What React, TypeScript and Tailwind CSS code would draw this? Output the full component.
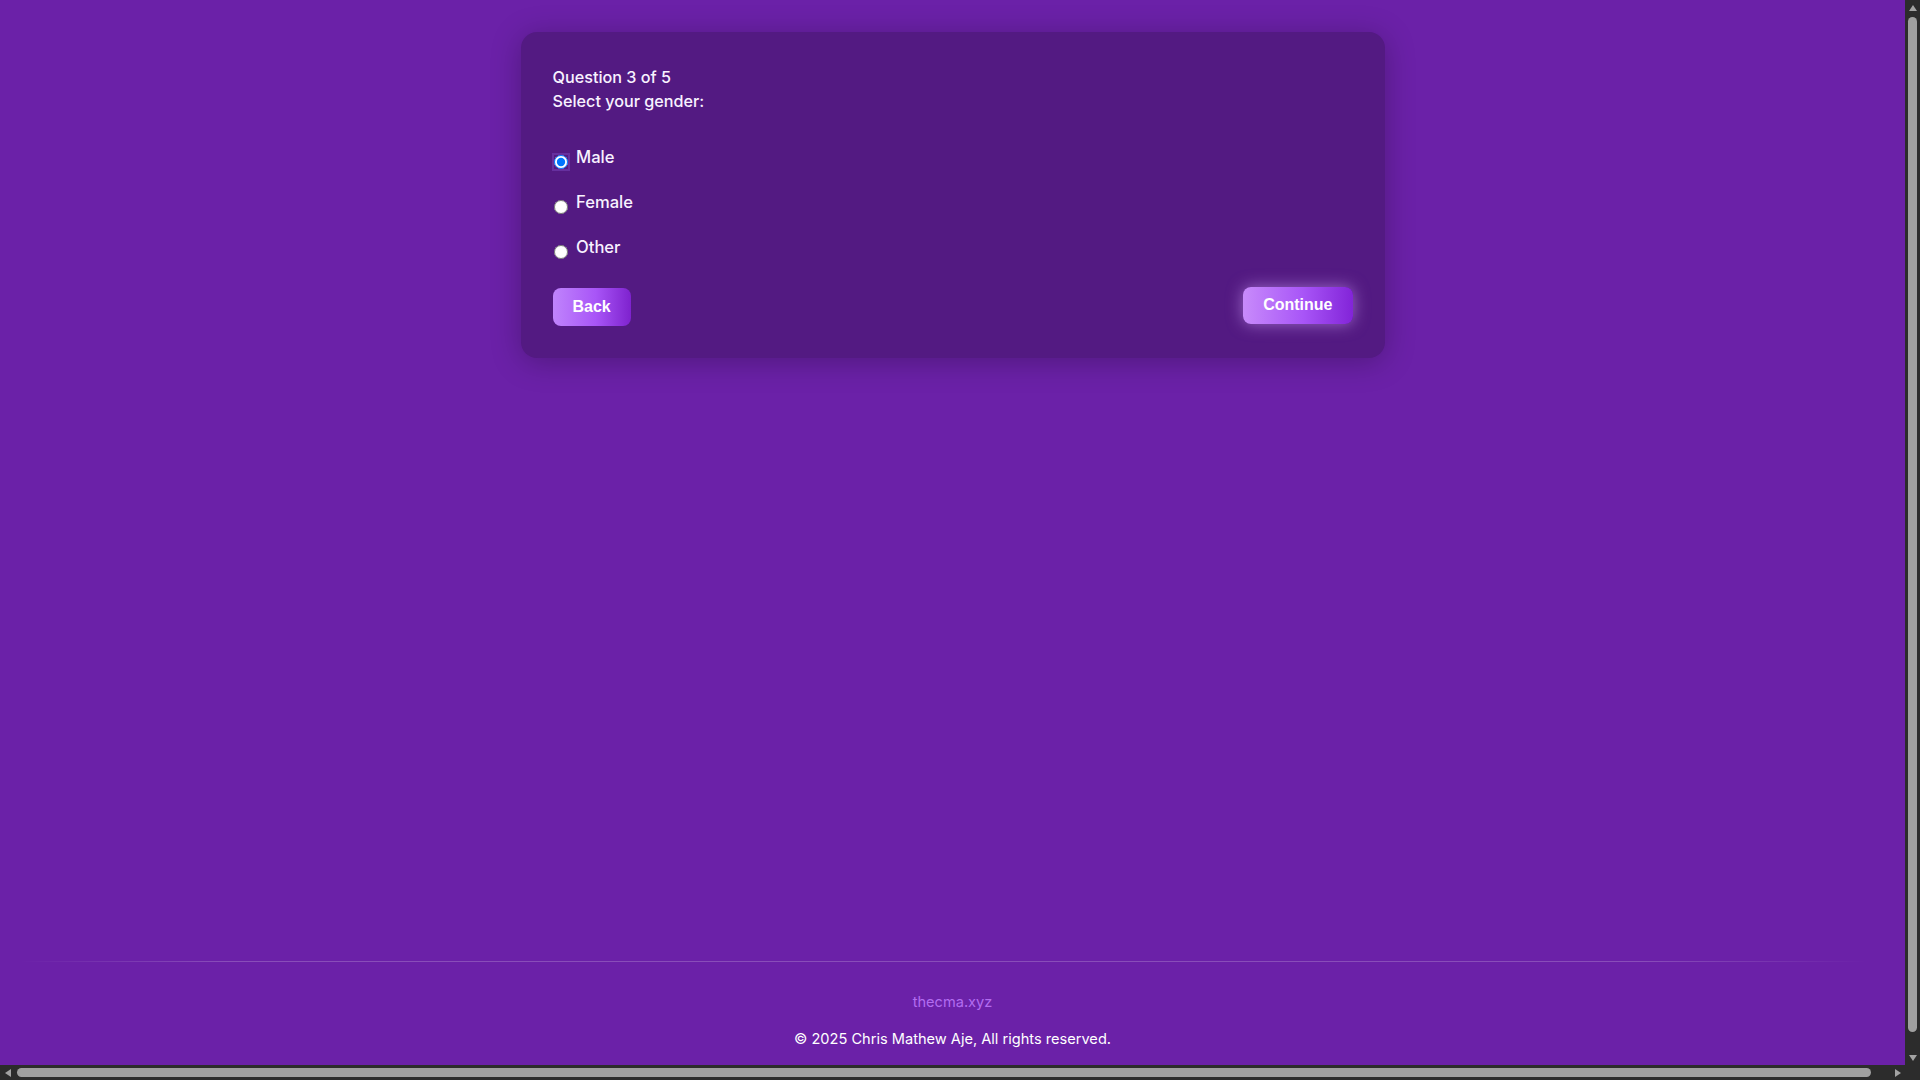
import React from "react";

function Tri({ dir }: { dir: "up" | "down" | "left" | "right" }) {
  const pts =
    dir === "up"
      ? "0,7 4,1 8,7"
      : dir === "down"
      ? "0,1 8,1 4,7"
      : dir === "left"
      ? "7,0 7,8 1,4"
      : "1,0 1,8 7,4";
  return (
    <svg width="8" height="8" viewBox="0 0 8 8">
      <polygon points={pts} fill="#a3a3a3" />
    </svg>
  );
}

function Option({ label, checked }: { label: string; checked?: boolean }) {
  return (
    <label className="flex h-6 items-start">
      <input
        type="radio"
        name="gender"
        defaultChecked={checked}
        className={
          "mt-[9.5px] ml-px mr-[8.5px] h-[14px] w-[14px] shrink-0 " +
          (checked ? "outline-[2.5px] outline-solid outline-[#66309f]" : "")
        }
      />
      <span className="leading-6">{label}</span>
    </label>
  );
}

export default function App() {
  return (
    <div className="flex h-screen w-screen flex-col overflow-hidden bg-[#2c2c2c] font-['Inter',sans-serif]">
      <div className="flex min-h-0 flex-1">
        <main className="flex min-w-0 flex-1 flex-col bg-[#6b21a8] text-[#f8f2ff]">
          <section className="mx-auto mt-8 w-[864px] rounded-2xl bg-[#531a82] px-8 pt-[33px] pb-8 shadow-[0_4px_30px_rgba(0,0,0,0.25)]">
            <p className="text-[16.2px] leading-6 font-medium">Question 3 of 5</p>
            <p className="text-[16.2px] leading-6 font-medium">Select your gender:</p>
            <div className="mt-8 flex flex-col gap-[21px] text-[16.6px] font-medium">
              <Option label="Male" checked />
              <Option label="Female" />
              <Option label="Other" />
            </div>
            <div className="mt-[29px] flex items-center justify-between font-['Liberation_Sans',Arial,sans-serif]">
              <button className="rounded-lg bg-[linear-gradient(90deg,#c084fc,#a855f7_55%,#7e22ce)] px-5 py-[10px] text-base leading-[18px] font-bold text-white">
                Back
              </button>
              <button className="-translate-y-0.5 rounded-lg bg-[linear-gradient(90deg,#c88bfb,#a855f7_55%,#8224d8)] px-5 py-[9.5px] text-base leading-[18px] font-bold text-white shadow-[0_0_16px_rgba(216,170,255,0.55)]">
                Continue
              </button>
            </div>
          </section>
          <footer className="mt-auto flex flex-col items-center pb-4">
            <div className="h-px w-full bg-[linear-gradient(to_right,transparent_1%,rgba(255,255,255,0.2)_12%,rgba(255,255,255,0.2)_86%,transparent_98%)]" />
            <a className="mt-[30px] text-[14.6px] leading-5 text-[#b26cf0]">thecma.xyz</a>
            <p className="mt-[17px] text-[14.6px] leading-5 text-white">
              © 2025 Chris Mathew Aje, All rights reserved.
            </p>
          </footer>
        </main>
        <div className="flex w-[15px] flex-col items-center bg-[#2c2c2c]">
          <div className="flex h-[15px] items-center justify-center">
            <Tri dir="up" />
          </div>
          <div className="mt-[2px] h-[1015px] w-[9px] rounded-full bg-[#a0a0a0]" />
          <div className="flex-1" />
          <div className="flex h-[15px] items-center justify-center">
            <Tri dir="down" />
          </div>
        </div>
      </div>
      <div className="flex h-[15px] items-center bg-[#2c2c2c]">
        <div className="flex w-[15px] items-center justify-center">
          <Tri dir="left" />
        </div>
        <div className="ml-[2px] h-[9px] w-[1854px] rounded-full bg-[#a0a0a0]" />
        <div className="flex-1" />
        <div className="flex w-[15px] items-center justify-center">
          <Tri dir="right" />
        </div>
        <div className="w-[15px]" />
      </div>
    </div>
  );
}
